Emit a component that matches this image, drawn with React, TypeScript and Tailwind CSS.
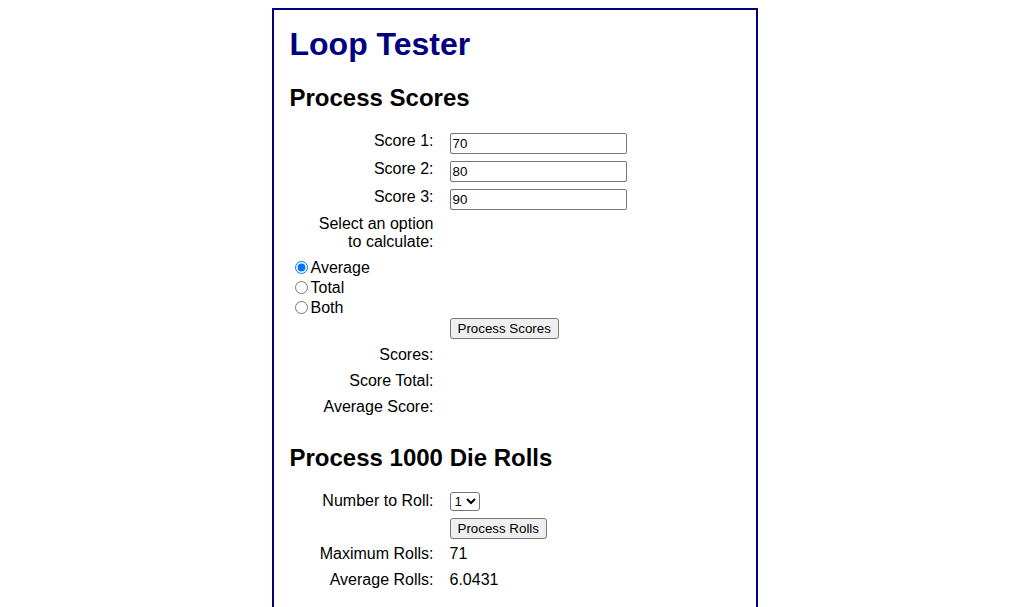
import React from "react";

const font = { fontFamily: '"Liberation Sans", Arial, sans-serif' };

function Row({ label, children, h = "h-[28px]" }: { label: string; children?: React.ReactNode; h?: string }) {
  return (
    <div className={`flex items-start ${h}`}>
      <div className="w-[144px] shrink-0 text-right leading-[18px]">{label}</div>
      <div className="ml-4 flex items-start">{children}</div>
    </div>
  );
}

function TextBox({ value }: { value: string }) {
  return (
    <input
      type="text"
      defaultValue={value}
      className="mt-px h-[21px] w-[177px] rounded-[2px] border border-[#767676] bg-white px-[2px] py-[1px] text-[13.33px] leading-[15px] text-black outline-none"
      style={font}
    />
  );
}

function Btn({ children }: { children: React.ReactNode }) {
  return (
    <button
      type="button"
      className="h-[21px] rounded-[3px] border border-[#767676] bg-[#efefef] px-[7px] text-[13.33px] leading-[15px] text-black"
      style={font}
    >
      {children}
    </button>
  );
}

function Radio({ label, checked }: { label: string; checked?: boolean }) {
  return (
    <label className="flex h-[20px] items-start leading-[20px]">
      <input
        type="radio"
        name="calc"
        defaultChecked={checked}
        className="ml-[5px] mr-[3px] mt-[2.5px] h-[13px] w-[13px]"
      />
      <span>{label}</span>
    </label>
  );
}

export default function App() {
  return (
    <div className="min-h-[607px] bg-white pt-2" style={font}>
      <div className="mx-auto w-[486px] border-2 border-[#000080] px-4 pb-4 text-[16px] text-black">
        <h1 className="mt-[16px] text-[32px] font-bold leading-[37px] text-[#000080]">Loop Tester</h1>
        <h2 className="mt-[21px] text-[24px] font-bold leading-[28px]">Process Scores</h2>
        <div className="mt-[20px]">
          <Row label="Score 1:">
            <TextBox value="70" />
          </Row>
          <Row label="Score 2:">
            <TextBox value="80" />
          </Row>
          <Row label="Score 3:">
            <TextBox value="90" />
          </Row>
          <div className="-mt-px w-[144px] text-right leading-[18px]">
            Select an option
            <br />
            to calculate:
          </div>
          <div className="mt-[7px]">
            <Radio label="Average" checked />
            <Radio label="Total" />
            <Radio label="Both" />
          </div>
          <div className="-mt-[2px] ml-[160px]">
            <Btn>Process Scores</Btn>
          </div>
          <div className="mt-[6px]">
            <Row label="Scores:" h="h-[26px]" />
            <Row label="Score Total:" h="h-[26px]" />
            <Row label="Average Score:" h="h-[26px]" />
          </div>
        </div>
        <h2 className="mt-[20px] text-[24px] font-bold leading-[28px]">Process 1000 Die Rolls</h2>
        <div className="mt-[20px]">
          <Row label="Number to Roll:" h="h-[24px]">
            <select
              defaultValue="1"
              className="h-[19px] rounded-[3px] border border-[#767676] bg-white text-[13.33px] text-black"
              style={font}
            >
              {[1, 2, 3, 4, 5, 6].map((n) => (
                <option key={n} value={n}>
                  {n}
                </option>
              ))}
            </select>
          </Row>
          <div className="ml-[160px]">
            <Btn>Process Rolls</Btn>
          </div>
          <div className="mt-[5px]">
            <Row label="Maximum Rolls:" h="h-[26px]">
              <span className="leading-[18px]">71</span>
            </Row>
            <Row label="Average Rolls:" h="h-[26px]">
              <span className="leading-[18px]">6.0431</span>
            </Row>
          </div>
        </div>
      </div>
    </div>
  );
}
